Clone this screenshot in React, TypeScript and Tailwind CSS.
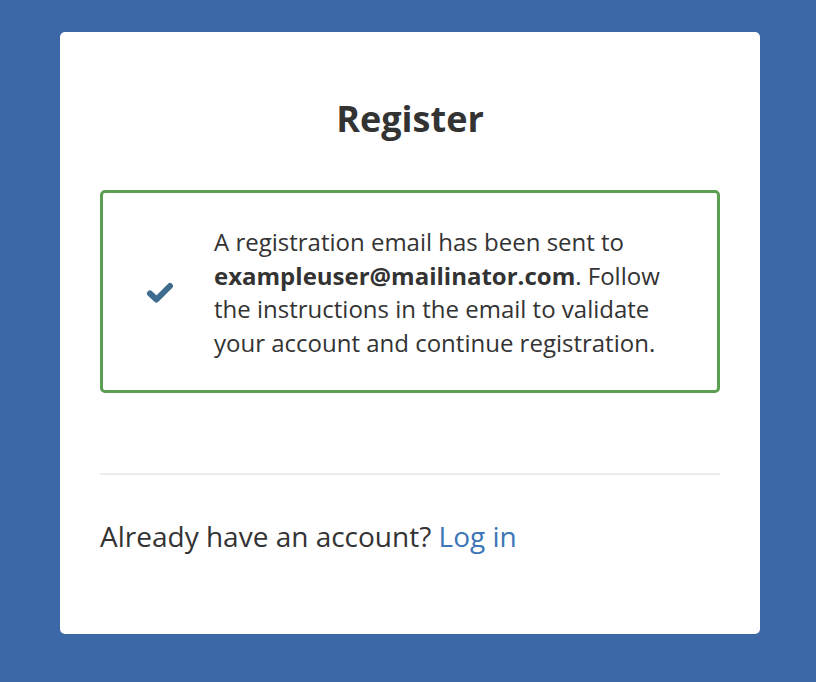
const CheckIcon = () => (
  <svg viewBox="0 0 28 21" className="h-[21px] w-[28px]" fill="none">
    <polyline points="4,11.5 10.5,17.5 24,4" stroke="#3f6c8e" strokeWidth="6" strokeLinecap="round" strokeLinejoin="round" />
  </svg>
);

export default function App() {
  return (
    <div className="h-[682px] overflow-hidden bg-[#3d68a7] pl-[60px] pt-[32px] font-['Open_Sans',sans-serif] text-[#333333]">
      <div className="w-[700px] rounded-[5px] bg-white px-[40px] pt-[63px] pb-[80px]">
        <h1 className="text-center text-[36px] font-bold leading-[48px]">Register</h1>
        <div className="mt-[47px] flex items-center rounded-[5px] border-[3px] border-[#5a9f52] pt-[32px] pb-[30px] pl-[43px] pr-[33px]">
          <div className="mr-[40px] shrink-0">
            <CheckIcon />
          </div>
          <p className="text-[24px] leading-[33.7px]">
            A registration email has been sent to <strong className="font-bold">exampleuser@mailinator.com</strong>. Follow the instructions in the email to validate your account and continue registration.
          </p>
        </div>
        <hr className="mt-[80px] border-t-2 border-[#ececec]" />
        <p className="mt-[43px] text-[28px] leading-[36px]">
          Already have an account? <a href="#" className="text-[#3d76b8]">Log in</a>
        </p>
      </div>
    </div>
  );
}
